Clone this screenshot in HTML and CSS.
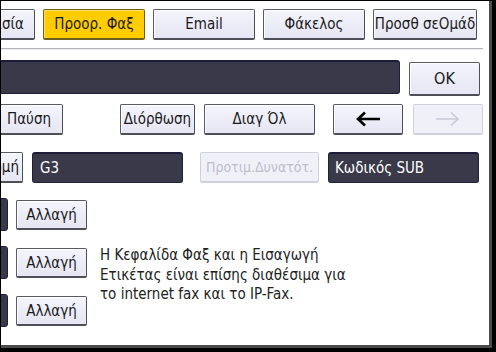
FILE: index.html
```html
<!DOCTYPE html>
<html>
<head>
<meta charset="utf-8">
<link rel="stylesheet" href="styles.css">
</head>
<body>
<div class="screen">
  <div class="row tabs">
    <div class="btn tab-first">Επεξεργασία</div>
    <div class="btn tab yellow">Προορ. Φαξ</div>
    <div class="btn tab">Email</div>
    <div class="btn tab">Φάκελος</div>
    <div class="btn tab wide">Προσθ σεΟμάδ</div>
  </div>
  <div class="sep"></div>
  <div class="row entry">
    <div class="field field-main"></div>
    <div class="btn ok">OK</div>
  </div>
  <div class="row edit">
    <div class="btn pause">Παύση</div>
    <div class="btn fix">Διόρθωση</div>
    <div class="btn clear">Διαγ Όλ</div>
    <div class="btn arrow">
      <svg width="26" height="16" viewBox="0 0 26 16"><path d="M25 8H3M10 1.5L3 8l7 6.5" fill="none" stroke="#000" stroke-width="2.6"/></svg>
    </div>
    <div class="btn arrow disabled">
      <svg width="26" height="16" viewBox="0 0 26 16"><path d="M1 8h22M16 1.5L23 8l-7 6.5" fill="none" stroke="#c9c9d6" stroke-width="1.6"/></svg>
    </div>
  </div>
  <div class="row opts">
    <div class="btn mode">Διαδρομή</div>
    <div class="field g3">G3</div>
    <div class="btn disabled pref">Προτιμ.Δυνατότ.</div>
    <div class="field sub">Κωδικός SUB</div>
  </div>
  <div class="lower">
    <div class="changes">
      <div class="crow"><div class="stub"></div><div class="btn change">Αλλαγή</div></div>
      <div class="crow"><div class="stub"></div><div class="btn change">Αλλαγή</div></div>
      <div class="crow"><div class="stub"></div><div class="btn change">Αλλαγή</div></div>
    </div>
    <p class="note">Η Κεφαλίδα Φαξ και η Εισαγωγή<br>Ετικέτας είναι επίσης διαθέσιμα για<br>το internet fax και το IP-Fax.</p>
  </div>
</div>
</body>
</html>
```
FILE: styles.css
```css
html, body {
  margin: 0;
  padding: 0;
  background: #000;
}
body {
  width: 496px;
  height: 352px;
  overflow: hidden;
  font-family: "Liberation Sans Narrow", "DejaVu Sans Condensed", "Liberation Sans", sans-serif;
  font-stretch: condensed;
}
.screen {
  margin: 1px 0 0 1px;
  width: 488px;
  height: 344px;
  background: #fff;
  border-right: 3px solid #4c4c4c;
  border-bottom: 3px solid #4c4c4c;
  overflow: hidden;
}
.row {
  display: flex;
  align-items: flex-start;
}
.btn {
  box-sizing: border-box;
  height: 31px;
  display: flex;
  align-items: center;
  justify-content: center;
  flex: none;
  background: linear-gradient(#f4f4fc, #e6e6f4);
  border: 1px solid #5a5a66;
  border-bottom: 2px solid #4e4e58;
  border-right-color: #4e4e58;
  border-radius: 2px;
  box-shadow: inset 1px 1px 0 #fff;
  color: #1a1a1a;
  font-size: 15px;
  white-space: nowrap;
  overflow: hidden;
}
.btn.disabled {
  background: #f0f0f8;
  border-color: #d0d0dc;
  color: #bdbdcc;
  box-shadow: none;
}
.tabs {
  margin-top: 8px;
}
.tab-first {
  width: 100px;
  margin-left: -66px;
  justify-content: flex-end;
  padding-right: 10px;
}
.tab {
  width: 102px;
  margin-left: 8px;
}
.tab.wide {
  width: 104px;
  padding: 0 2px;
}
.yellow {
  background: #ffcc00;
  border-color: #6e5f1a;
  box-shadow: inset 1px 1px 0 #ffe066;
}
.sep {
  margin-top: 8px;
  width: 482px;
  height: 1px;
  background: #b4b4bc;
  border-bottom: 1px solid #ececf0;
}
.entry {
  margin-top: 10px;
}
.field {
  box-sizing: border-box;
  flex: none;
  background: #393949;
  border: 1px solid #20203a;
  border-top: 2px solid #1c1c38;
  border-radius: 3px;
  color: #fff;
  font-size: 15px;
  display: flex;
  align-items: center;
  white-space: nowrap;
}
.field-main {
  width: 409px;
  height: 34px;
  margin-left: -10px;
}
.ok {
  width: 71px;
  height: 34px;
  margin-left: 9px;
  margin-top: 2px;
  font-size: 16px;
}
.edit {
  margin-top: 8px;
}
.pause {
  width: 80px;
  margin-left: -18px;
  justify-content: flex-end;
  padding-right: 11px;
}
.fix {
  width: 75px;
  margin-left: 57px;
}
.clear {
  width: 111px;
  margin-left: 9px;
}
.arrow {
  width: 70px;
  margin-left: 18px;
}
.arrow.disabled {
  margin-left: 10px;
}
.arrow svg {
  display: block;
}
.opts {
  margin-top: 17px;
}
.mode {
  width: 60px;
  margin-left: -38px;
  justify-content: flex-end;
  padding-right: 3px;
}
.g3 {
  width: 151px;
  height: 31px;
  margin-left: 9px;
  padding-left: 7px;
}
.pref {
  width: 119px;
  margin-left: 17px;
  font-size: 14px;
}
.sub {
  width: 151px;
  height: 31px;
  margin-left: 9px;
  padding-left: 6px;
}
.lower {
  display: flex;
  align-items: flex-start;
  margin-top: 15px;
}
.changes {
  display: flex;
  flex-direction: column;
  gap: 15px;
  flex: none;
}
.crow {
  display: flex;
  align-items: flex-start;
  height: 33px;
}
.stub {
  box-sizing: border-box;
  width: 20px;
  height: 33px;
  margin-left: -13px;
  background: #393949;
  border: 1px solid #20203a;
  border-radius: 3px;
}
.change {
  width: 71px;
  height: 30px;
  margin-left: 8px;
  margin-top: 2px;
}
.note {
  margin: 48px 0 0 13px;
  font-size: 15px;
  line-height: 19.5px;
  color: #222;
}
```
